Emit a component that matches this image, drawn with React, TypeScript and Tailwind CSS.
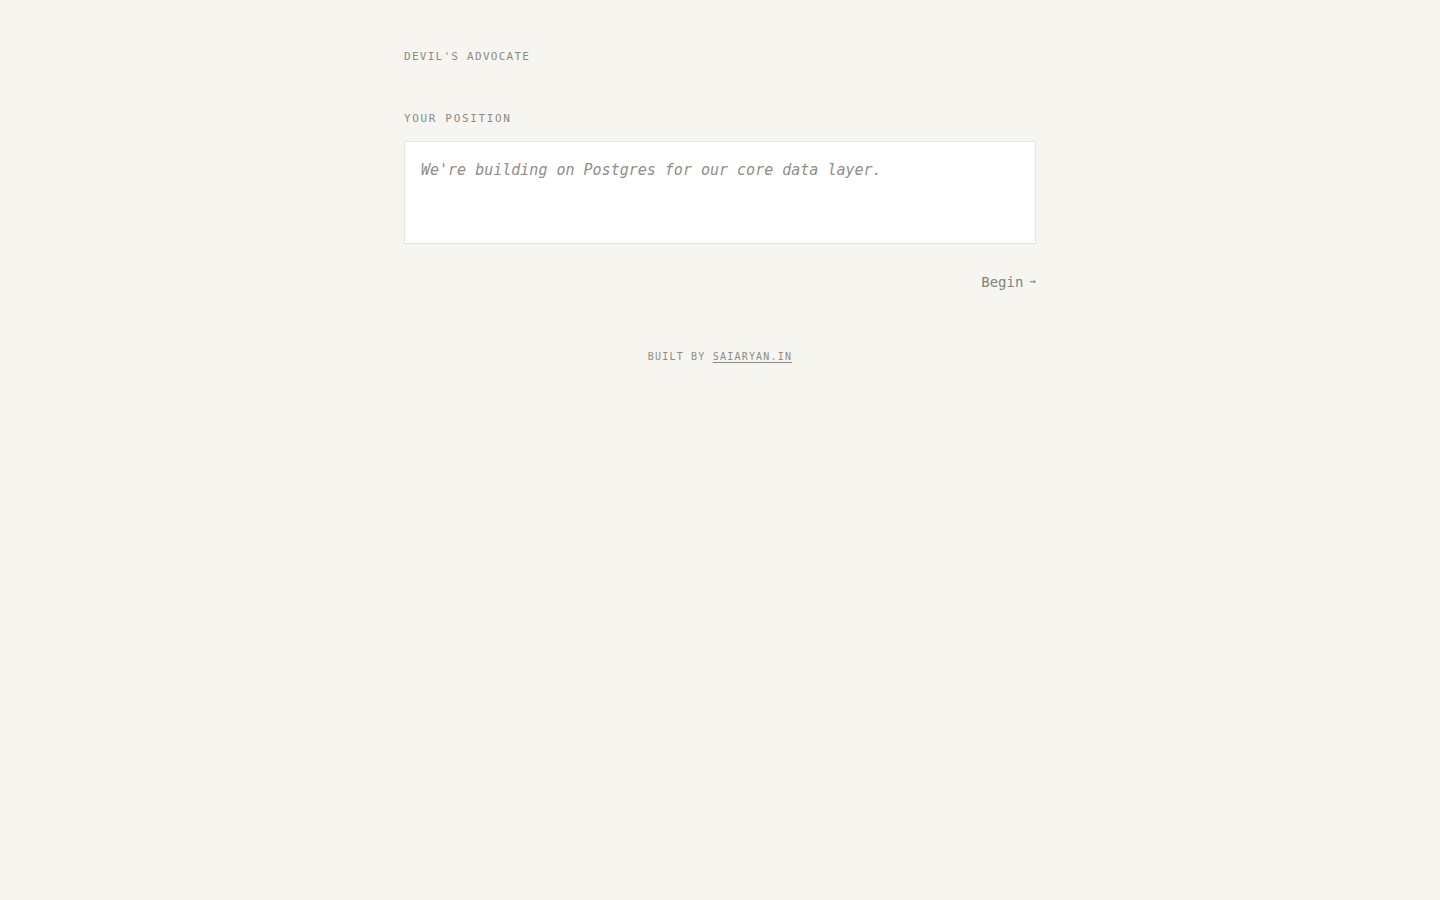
export default function App() {
  return (
    <div
      className="min-h-screen bg-[#f6f5f0] text-[#8a8883]"
      style={{ fontFamily: '"DejaVu Sans Mono", "Liberation Mono", monospace' }}
    >
      <main className="mx-auto w-[632px] pt-[51px]">
        {/* Title */}
        <h1 className="text-[11px] leading-[12px] tracking-[0.115em] uppercase text-[#8d8b86]">
          Devil's Advocate
        </h1>

        {/* Position input */}
        <label className="mt-[50px] block text-[11px] leading-[12px] tracking-[0.15em] uppercase text-[#8d8b86]">
          Your Position
        </label>
        <textarea
          className="mt-[16px] block h-[103px] w-full resize-none border border-[#e6e4de] bg-white px-4 py-[17px] text-[15px] leading-[22px] text-[#555] placeholder:italic placeholder:text-[#8f8d88] outline-none"
          placeholder="We're building on Postgres for our core data layer."
        />

        {/* Action */}
        <div className="mt-[28px] flex justify-end">
          <button className="flex items-center gap-[6px] text-[14px] leading-[20px] text-[#85837e]">
            <span>Begin</span>
            <span className="text-[11px]">→</span>
          </button>
        </div>

        {/* Footer */}
        <footer className="mt-[59px] text-center text-[10px] leading-[12px] tracking-[0.12em] uppercase text-[#8d8b86]">
          Built by{" "}
          <a href="#" className="underline underline-offset-2">
            saiaryan.in
          </a>
        </footer>
      </main>
    </div>
  );
}
